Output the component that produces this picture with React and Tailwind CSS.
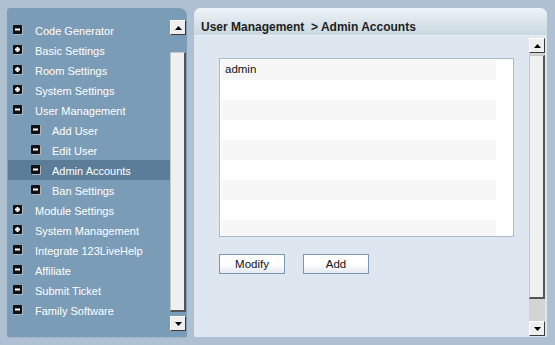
import React from 'react'

const menu = [
  { label: 'Code Generator', sign: 'minus', level: 0 },
  { label: 'Basic Settings', sign: 'plus', level: 0 },
  { label: 'Room Settings', sign: 'plus', level: 0 },
  { label: 'System Settings', sign: 'plus', level: 0 },
  { label: 'User Management', sign: 'minus', level: 0 },
  { label: 'Add User', sign: 'minus', level: 1 },
  { label: 'Edit User', sign: 'minus', level: 1 },
  { label: 'Admin Accounts', sign: 'minus', level: 1, active: true },
  { label: 'Ban Settings', sign: 'minus', level: 1 },
  { label: 'Module Settings', sign: 'plus', level: 0 },
  { label: 'System Management', sign: 'plus', level: 0 },
  { label: 'Integrate 123LiveHelp', sign: 'minus', level: 0 },
  { label: 'Affiliate', sign: 'minus', level: 0 },
  { label: 'Submit Ticket', sign: 'minus', level: 0 },
  { label: 'Family Software', sign: 'minus', level: 0 },
]

const TreeIcon = ({ sign }) => (
  <svg width="10" height="10" viewBox="0 0 10 10" className="shrink-0">
    <rect x="1" y="1" width="9" height="9" fill="#a9b6c3" />
    <rect x="0" y="0" width="9" height="9" rx="1" fill="#111" />
    <rect x="2" y="3.5" width="5" height="2" fill="#fff" />
    {sign === 'plus' && <rect x="3.5" y="2" width="2" height="5" fill="#fff" />}
  </svg>
)

const ScrollButton = ({ up }) => (
  <div className="w-[16px] h-[15px] bg-[#efefef] border-t border-l border-t-white border-l-white border-b border-r border-b-[#3a3a3a] border-r-[#3a3a3a] flex items-center justify-center shrink-0">
    <svg width="7" height="4" viewBox="0 0 7 4">
      {up ? <path d="M3.5 0 L7 4 L0 4 Z" fill="#000" /> : <path d="M0 0 L7 0 L3.5 4 Z" fill="#000" />}
    </svg>
  </div>
)

const Thumb = ({ className }) => (
  <div className={`w-[16px] bg-[#f0f0f0] border-l border-t border-l-[#c8c8c8] border-t-[#c8c8c8] border-r-2 border-b-2 border-r-[#555] border-b-[#555] ${className}`} />
)

export default function App() {
  return (
    <div
      className="w-[555px] h-[345px] bg-[#afc0d2] flex gap-[7px] pt-[8px] pl-[7px] overflow-hidden"
      style={{ fontFamily: '"Liberation Sans", Arial, sans-serif' }}
    >
      {/* Left navigation */}
      <div className="w-[180px] h-[330px] bg-[#7b9cb6] rounded-tr-[8px] rounded-tl-[3px] rounded-b-[2px] flex border-b border-dotted border-b-[#c5d3df]">
        <ul className="flex-1 pt-[12px] pl-[1px]">
          {menu.map((item) => (
            <li
              key={item.label}
              className={`h-[20px] flex items-center text-[11px] text-white ${item.active ? 'bg-[#5b7d98]' : ''} ${item.level ? 'pl-[23px] gap-[11px]' : 'pl-[5px] gap-[12px]'}`}
            >
              <TreeIcon sign={item.sign} />
              <span className="leading-none mt-[2px]">{item.label}</span>
            </li>
          ))}
        </ul>
        <div className="w-[16px] mr-[1px] pt-[12px] flex flex-col">
          <ScrollButton up />
          <div className="h-[17px]" />
          <Thumb className="h-[260px]" />
          <div className="h-[4px]" />
          <ScrollButton />
        </div>
      </div>

      {/* Right content panel */}
      <div className="w-[353px] h-[329px] rounded-t-[7px] rounded-b-[2px] overflow-hidden flex flex-col bg-[#dee6ef]">
        <div className="h-[28px] shrink-0 bg-gradient-to-b from-[#eef3f7] to-[#c9d8e1] flex items-center pl-[7px] pt-[10px] border-b border-[#e9eef4]">
          <span className="text-[12px] font-bold text-[#1e1e1e] whitespace-pre leading-none">User Management  &gt; Admin Accounts</span>
        </div>
        <div className="flex-1 flex">
          <div className="flex-1 pl-[25px] pt-[22px]">
            <div className="w-[295px] h-[179px] border border-[#a8bccd] bg-white p-[1px] overflow-hidden">
              {Array.from({ length: 9 }).map((_, i) => (
                <div
                  key={i}
                  className={`w-[275px] h-[20px] flex items-center pl-[4px] text-[11.5px] text-[#111] ${i % 2 === 0 ? 'bg-[#f7f7f7]' : 'bg-white'}`}
                >
                  {i === 0 ? 'admin' : ''}
                </div>
              ))}
            </div>
            <div className="flex gap-[18px] mt-[17px]">
              <button className="w-[66px] h-[20px] border border-[#7a98b2] bg-gradient-to-b from-white via-white to-[#e4e9ef] text-[11.5px] text-[#111] leading-none pt-[1px]">
                Modify
              </button>
              <button className="w-[66px] h-[20px] border border-[#7a98b2] bg-gradient-to-b from-white via-white to-[#e4e9ef] text-[11.5px] text-[#111] leading-none pt-[1px]">
                Add
              </button>
            </div>
          </div>
          <div className="w-[16px] mr-[2px] mt-[2px] mb-[1px] flex flex-col">
            <ScrollButton up />
            <div className="h-[2px] bg-[#d4d4d4]" />
            <Thumb className="h-[244px]" />
            <div className="flex-1 bg-[#d4d4d4]" />
            <ScrollButton />
          </div>
        </div>
      </div>
    </div>
  )
}
